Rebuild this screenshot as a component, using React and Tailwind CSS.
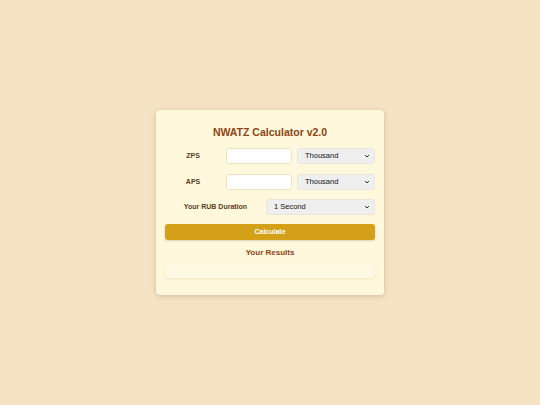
import React from "react";

function Chevron() {
  return (
    <svg width="6" height="4" viewBox="0 0 6 4" className="absolute right-[4px] top-1/2 -translate-y-1/2">
      <path d="M1 1 L3 3 L5 1" fill="none" stroke="#333" strokeWidth="1" />
    </svg>
  );
}

function Select({ value, width }) {
  return (
    <div className={`relative h-[16px] ${width} rounded-[3px] bg-[#efefef] border border-[#e8e4d8] flex items-center pl-[7px] text-[7.5px] text-[#111]`}>
      {value}
      <Chevron />
    </div>
  );
}

export default function App() {
  return (
    <div
      className="w-[540px] h-[405px] bg-[#f5e3c3] flex items-center justify-center"
      style={{ fontFamily: '"Liberation Sans", Arial, sans-serif' }}
    >
      <div className="w-[228px] h-[185px] bg-[#fff8dc] rounded-[4px] shadow-[0_1px_5px_rgba(120,80,20,0.25)] px-[9px] pt-[16px] flex flex-col">
        <h1 className="text-center text-[10.5px] font-bold text-[#8b4513] leading-[13px]">
          NWATZ Calculator v2.0
        </h1>
        <div className="mt-[9px] flex items-center h-[16px]">
          <div className="w-[57px] text-center text-[7px] font-bold text-[#5a3d1e]">ZPS</div>
          <div className="ml-[5px] w-[67px] h-[16px] bg-white border border-[#f0e2bf] rounded-[3px]" />
          <div className="ml-[5px]"><Select value="Thousand" width="w-[78px]" /></div>
        </div>
        <div className="mt-[10px] flex items-center h-[16px]">
          <div className="w-[57px] text-center text-[7px] font-bold text-[#5a3d1e]">APS</div>
          <div className="ml-[5px] w-[67px] h-[16px] bg-white border border-[#f0e2bf] rounded-[3px]" />
          <div className="ml-[5px]"><Select value="Thousand" width="w-[78px]" /></div>
        </div>
        <div className="mt-[9px] flex items-center h-[16px]">
          <div className="w-[102px] text-center text-[7px] font-bold text-[#5a3d1e]">Your RUB Duration</div>
          <div className="ml-auto"><Select value="1 Second" width="w-[109px]" /></div>
        </div>
        <button className="mt-[9px] h-[16px] w-full rounded-[3px] bg-[#d4a017] shadow-[0_1px_2px_rgba(0,0,0,0.15)] text-white text-[7px] font-bold flex items-center justify-center">
          Calculate
        </button>
        <div className="mt-[8px] text-center text-[8px] font-bold text-[#8b4513] leading-[10px]">
          Your Results
        </div>
        <div className="mt-[8px] h-[12px] w-full rounded-[4px] bg-[#fff9e3] shadow-[0_1px_3px_rgba(180,150,90,0.2)]" />
      </div>
    </div>
  );
}
